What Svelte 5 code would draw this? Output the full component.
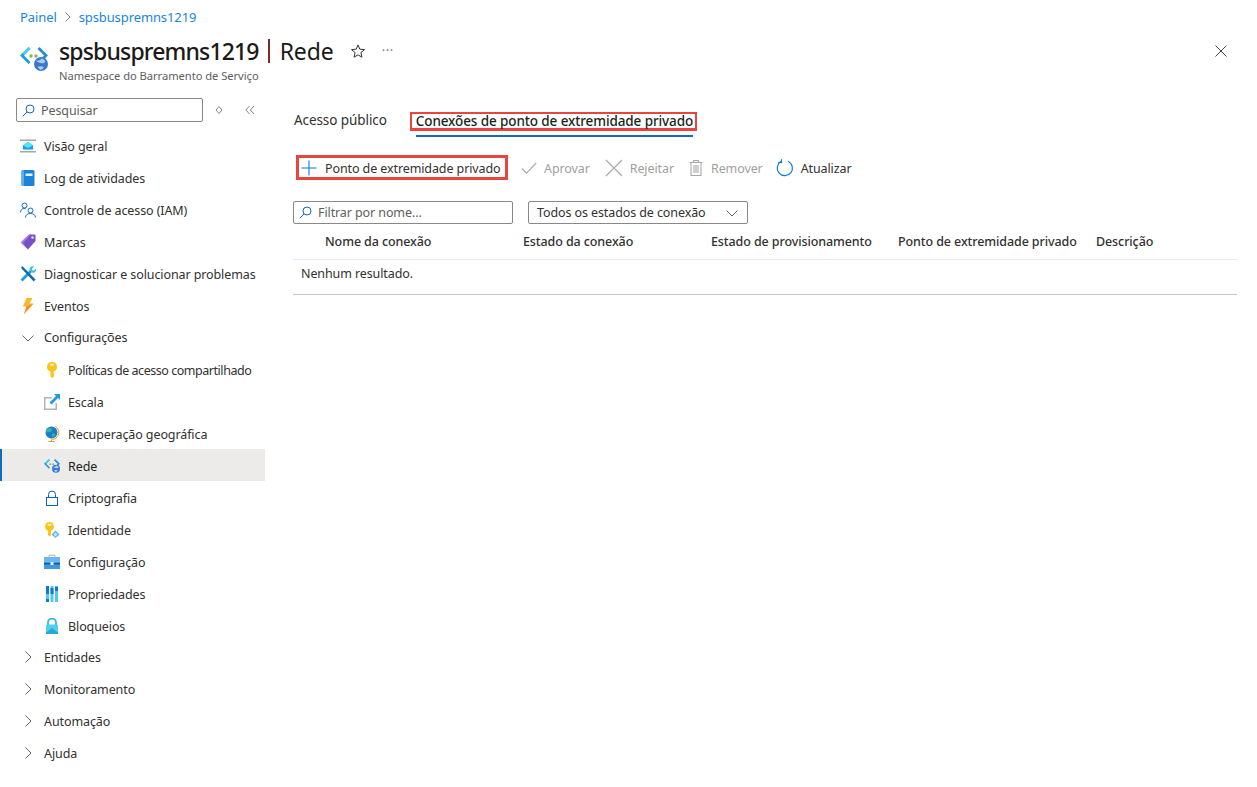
<script lang="ts">
	const topItems = [
		{ icon: 'overview', label: 'Visão geral' },
		{ icon: 'log', label: 'Log de atividades' },
		{ icon: 'iam', label: 'Controle de acesso (IAM)' },
		{ icon: 'tag', label: 'Marcas' },
		{ icon: 'tools', label: 'Diagnosticar e solucionar problemas' },
		{ icon: 'bolt', label: 'Eventos' }
	];
	const configItems = [
		{ icon: 'key', label: 'Políticas de acesso compartilhado', tight: true },
		{ icon: 'scale', label: 'Escala' },
		{ icon: 'globe', label: 'Recuperação geográfica' },
		{ icon: 'net', label: 'Rede', active: true },
		{ icon: 'lock', label: 'Criptografia' },
		{ icon: 'identity', label: 'Identidade' },
		{ icon: 'case', label: 'Configuração' },
		{ icon: 'bars', label: 'Propriedades' },
		{ icon: 'padlock', label: 'Bloqueios' }
	];
	const groups = ['Entidades', 'Monitoramento', 'Automação', 'Ajuda'];
	const columns = ['Nome da conexão', 'Estado da conexão', 'Estado de provisionamento', 'Ponto de extremidade privado', 'Descrição'];
</script>

{#snippet netIcon(size: number)}
	<svg width={size} height={(size * 24) / 28} viewBox="0 0 28 24">
		<path d="M9.500 1 2 8.500 9.500 16" fill="none" stroke="#1e9be8" stroke-width="2.800" />
		<path d="M3.500 7 9.500 1" fill="none" stroke="#50d0f5" stroke-width="2.800" />
		<path d="M18.500 1 26 8.500 23 11.500" fill="none" stroke="#1e8ce0" stroke-width="2.800" />
		<circle cx="11" cy="9" r="1.700" fill="#86b83a" />
		<circle cx="16" cy="9" r="1.700" fill="#9aa39a" />
		<circle cx="21" cy="17" r="7" fill="#3a78cc" />
		<path d="M15.500 13.500c3 1 4.500-.5 6.500-2 2 1 3 2 3.500 3-1 1.500-3 2.500-4.500 1.500-2 0-3.500-1-5.500-2.500zM17.500 20c2-1 4.500-1 6.500 0-1 1.500-2 2.500-3.500 3-1-1-2-1.800-3-3z" fill="#a9ccef" />
	</svg>
{/snippet}

{#snippet icon(name: string)}
	{#if name === 'overview'}
		<svg width="16" height="16" viewBox="0 0 16 16">
			<path d="M0 1.500h16v1.500h-16zM0 13h16v1.500h-16z" fill="#a6a6a6" />
			<path d="M2 4h12v8h-12z" fill="#e8f4fb" />
			<path d="M3 11.500v-4l5-3.500 5 3.500v4z" fill="#1e9be8" />
			<path d="M3 7.500 8 10l5-2.500-5-3.500z" fill="#50e6ff" />
		</svg>
	{:else if name === 'log'}
		<svg width="16" height="16" viewBox="0 0 16 16">
			<rect x="1.500" y="0" width="13" height="16" rx="1.500" fill="#1b84d8" />
			<rect x="1.500" y="0" width="2.500" height="16" rx="1" fill="#5aaef0" />
			<rect x="5.500" y="3.500" width="7" height="2.500" fill="#e3f1fb" />
		</svg>
	{:else if name === 'iam'}
		<svg width="16" height="16" viewBox="0 0 16 16" fill="none" stroke="#0f6cbd" stroke-width="1">
			<circle cx="4.500" cy="3.500" r="2.500" />
			<path d="M.5 10.500c0-2.500 1.500-4 3.500-4 .7 0 1.300.2 1.800.5" />
			<circle cx="10.500" cy="8.500" r="2.500" />
			<path d="M5.500 15.500c0-2.500 2-4 5-4s5 1.500 5 4" />
		</svg>
	{:else if name === 'tag'}
		<svg width="16" height="16" viewBox="0 0 16 16">
			<path d="M9 .5h5.500a1 1 0 0 1 1 1V7L8 15.500.8 8.500z" fill="#7b4fc4" />
			<path d="M.8 8.500 9 .5h2L3 9l5 6.500z" fill="#a67af4" />
			<circle cx="12.500" cy="3.500" r="1.200" fill="#e8dcfb" />
		</svg>
	{:else if name === 'tools'}
		<svg width="16" height="16" viewBox="0 0 16 16">
			<path d="M2.500 15.500.5 13.500 10 4l2 2z" fill="#1e9be8" />
			<path d="M1 1 2.500.2 15.500 13.500l-1.800 2L2.200 3.200z" fill="#0d6aa8" />
			<path d="M9.500 3.500C9.500 1.500 11.500-.3 14 .5l-2.200 2.200.6 1.500 1.500.6L16 2.600c.5 2.600-1.500 4.400-3.500 4.200z" fill="#32bedd" />
		</svg>
	{:else if name === 'bolt'}
		<svg width="16" height="16" viewBox="0 0 16 16">
			<path d="M6.500 0h6L9.500 5.500h4L4 16l2.500-7.500H2.800z" fill="#fcb72c" />
			<path d="M13.500 5.500 4 16l2.500-7.500z" fill="#f78d1e" />
		</svg>
	{:else if name === 'key'}
		<svg width="16" height="16" viewBox="0 0 16 16">
			<path d="M8 0a4.800 4.800 0 0 1 1.500 9.400V11l1 1-1 1 1 1-2.500 2-1.500-1.500V9.400A4.800 4.800 0 0 1 8 0z" fill="#fcc419" />
			<rect x="6" y="1.800" width="4" height="2" rx="1" fill="#fff3bf" />
		</svg>
	{:else if name === 'scale'}
		<svg width="16" height="16" viewBox="0 0 16 16">
			<path d="M0 3h8v1.500H1.500v10h10V9H13v7H0z" fill="#b3b3b3" />
			<path d="M10 0h6v6l-2-2-6.500 6.500-2-2L12 2z" fill="#1e9be8" />
		</svg>
	{:else if name === 'globe'}
		<svg width="16" height="16" viewBox="0 0 16 16">
			<circle cx="7.500" cy="6.500" r="6" fill="#1b7cc8" />
			<path d="M3 3c2-1.500 4-1 5 0s-1 3-3 3-3 1-3 0zM8 8c2-1 3 0 3 1s-2 2.500-3 2z" fill="#34b6a6" />
			<path d="M11.500.5a7 7 0 0 1 .5 11.500c-1.300 1-3 1.400-4.500 1.200" fill="none" stroke="#f7941d" stroke-width="1" />
			<path d="M7.500 13.500v1.500M4.500 15.500h6" stroke="#f7941d" stroke-width="1" />
		</svg>
	{:else if name === 'net'}
		{@render netIcon(16)}
	{:else if name === 'lock'}
		<svg width="16" height="16" viewBox="0 0 16 16" fill="none" stroke="#0b5cc5" stroke-width="1">
			<rect x="2.500" y="7.500" width="11" height="8" />
			<path d="M4.500 7.500V4.500a3.500 3.500 0 0 1 7 0v3" />
		</svg>
	{:else if name === 'identity'}
		<svg width="16" height="16" viewBox="0 0 16 16">
			<path d="M5.500 0a4.500 4.500 0 0 1 1.500 8.700V13l-1.500 1.500L4 13V8.700A4.500 4.500 0 0 1 5.500 0z" fill="#fcc419" />
			<rect x="3.500" y="1.800" width="4" height="2" rx="1" fill="#fff3bf" />
			<path d="M11.500 8.500 15.500 12.500l-4 3.500-4-3.500z" fill="#5cb8e6" />
			<path d="M11.500 10.500l2 2-2 1.800-2-1.800z" fill="#cde9f7" />
		</svg>
	{:else if name === 'case'}
		<svg width="16" height="16" viewBox="0 0 16 16">
			<path d="M5 3V1.200h6V3" fill="none" stroke="#b3b3b3" stroke-width="1" />
			<rect x="0" y="3" width="16" height="12" fill="#3e9be0" />
			<rect x="0" y="3" width="16" height="5" fill="#6cb8ee" />
			<rect x="0" y="9" width="16" height="1.500" fill="#0f5fa8" />
			<rect x="6.500" y="8" width="3" height="3" fill="#dff0fb" />
		</svg>
	{:else if name === 'bars'}
		<svg width="16" height="16" viewBox="0 0 16 16">
			<path d="M2 0h3v16H2z" fill="#0f78d4" />
			<path d="M2 8h3v5H2z" fill="#50c8f0" />
			<path d="M6.500 0h3v16h-3z" fill="#50c8f0" />
			<path d="M6.500 2h3v6h-3z" fill="#0f78d4" />
			<path d="M11 0h3v16h-3z" fill="#50c8f0" />
			<path d="M11 1h3v4h-3z" fill="#0f78d4" />
		</svg>
	{:else if name === 'padlock'}
		<svg width="16" height="16" viewBox="0 0 16 16">
			<path d="M4 7V4.500a4 4 0 0 1 8 0V7" fill="none" stroke="#38b6e0" stroke-width="1.800" />
			<rect x="2" y="6.500" width="12" height="9.500" rx="1" fill="#4fd0ee" />
			<path d="M2 14.500 8 10l6 4.500V16H2z" fill="#2aa9d6" />
		</svg>
	{/if}
{/snippet}

{#snippet chevronRight()}
	<svg width="12" height="12" viewBox="0 0 12 12" fill="none" stroke="#555" stroke-width="0.9"><path d="M3.500 .5 9 6l-5.500 5.500" /></svg>
{/snippet}

{#snippet chevronDown()}
	<svg width="12" height="12" viewBox="0 0 12 12" fill="none" stroke="#555" stroke-width="0.9"><path d="M.5 3.500 6 9l5.500-5.500" /></svg>
{/snippet}

{#snippet searchGlyph()}
	<svg class="glass" width="13" height="13" viewBox="0 0 13 13" fill="none" stroke="#0f6cbd" stroke-width="1">
		<circle cx="8" cy="5" r="4" />
		<path d="M5.200 7.800 .8 12.200" />
	</svg>
{/snippet}

<div class="page">
	<nav class="crumbs">
		<a href="#top">Painel</a>
		<svg width="8" height="10" viewBox="0 0 8 10" fill="none" stroke="#777" stroke-width="0.9"><path d="M1.500 .5 6 5 1.500 9.500" /></svg>
		<a href="#top">spsbuspremns1219</a>
	</nav>

	<header class="head">
		<div class="logo">{@render netIcon(28)}</div>
		<div class="titles">
			<div class="title-row">
				<h1>spsbuspremns1219<span class="sep"></span><span class="light">Rede</span></h1>
				<svg class="star" width="14" height="14" viewBox="0 0 14 14" fill="none" stroke="#333" stroke-width="1"><path d="M7 .9 8.800 5.200l4.700.4-3.600 3 1.100 4.600L7 10.800l-4 2.400 1.100-4.600-3.600-3 4.700-.4z" /></svg>
				<span class="more">···</span>
			</div>
			<div class="sub">Namespace do Barramento de Serviço</div>
		</div>
		<svg class="close" width="14" height="14" viewBox="0 0 14 14" fill="none" stroke="#444" stroke-width="1"><path d="M1.500 1.500l11 11M12.500 1.500l-11 11" /></svg>
	</header>

	<div class="body">
		<aside class="side">
			<div class="side-search">
				<div class="searchbox">{@render searchGlyph()}<span>Pesquisar</span></div>
				<svg class="updown" width="8" height="10" viewBox="0 0 8 10" fill="none" stroke="#777" stroke-width="0.9"><path d="M4 1.500 7 5 4 8.500 1 5z" /></svg>
				<svg class="collapse" width="10" height="10" viewBox="0 0 10 10" fill="none" stroke="#777" stroke-width="0.9"><path d="M4.500 1 .8 5l3.700 4M9 1 5.300 5 9 9" /></svg>
			</div>

			{#each topItems as item}
				<div class="item"><span class="ico">{@render icon(item.icon)}</span>{item.label}</div>
			{/each}

			<div class="item open"><span class="ico chev">{@render chevronDown()}</span>Configurações</div>
			{#each configItems as item}
				<div class="item sub-item" class:active={item.active} class:tight={item.tight}><span class="ico">{@render icon(item.icon)}</span>{item.label}</div>
			{/each}

			{#each groups as group}
				<div class="item"><span class="ico chev">{@render chevronRight()}</span>{group}</div>
			{/each}
		</aside>

		<main class="main">
			<div class="tabs">
				<div class="tab">Acesso público</div>
				<div class="tab current"><span class="mark">Conexões de ponto de extremidade privado</span></div>
			</div>

			<div class="toolbar">
				<button class="tool add">
					<svg width="16" height="16" viewBox="0 0 16 16" stroke="#0f7bd4" stroke-width="1.100"><path d="M8 .5v15M.5 8h15" /></svg>
					Ponto de extremidade privado
				</button>
				<button class="tool off approve">
					<svg width="16" height="16" viewBox="0 0 16 16" fill="none" stroke="#aaa" stroke-width="1.100"><path d="M.8 8.500 5.500 13.200 15.200 3" /></svg>
					Aprovar
				</button>
				<button class="tool off">
					<svg width="18" height="18" viewBox="0 0 18 18" fill="none" stroke="#aaa" stroke-width="1.100"><path d="M1 1l16 16M17 1 1 17" /></svg>
					Rejeitar
				</button>
				<button class="tool off trash">
					<svg width="14" height="16" viewBox="0 0 14 16" fill="none" stroke="#aaa" stroke-width="1.100"><path d="M.5 2.500h13M4.500 2.500V.5h5v2M2 2.500v13h10v-13M5 5v8M7 5v8M9 5v8" /></svg>
					Remover
				</button>
				<button class="tool refresh">
					<svg width="18" height="18" viewBox="0 0 18 18" fill="none" stroke="#0f7bd4" stroke-width="1.200"><path d="M5 2.500A7.600 7.600 0 1 0 12 2.200M5.500 .3V3.300H2.300" /></svg>
					Atualizar
				</button>
			</div>

			<div class="filters">
				<div class="filter">{@render searchGlyph()}<span>Filtrar por nome...</span></div>
				<div class="select"><span>Todos os estados de conexão</span>{@render chevronDown()}</div>
			</div>

			<div class="grid head-row">
				{#each columns as col}
					<div class="cell">{col}</div>
				{/each}
			</div>
			<div class="empty">Nenhum resultado.</div>
		</main>
	</div>
</div>

<style>
	:global(body) {
		margin: 0;
		background: #fff;
	}

	.page {
		width: 1257px;
		height: 787px;
		overflow: hidden;
		font-family: 'Noto Sans', 'Open Sans', sans-serif;
		font-size: 12.5px;
		letter-spacing: -0.1px;
		color: #323130;
	}

	.crumbs {
		display: flex;
		align-items: center;
		gap: 7px;
		height: 18px;
		padding: 8px 0 0 20px;
		font-size: 13px;
	}

	.crumbs a {
		color: #1a86d8;
		text-decoration: none;
	}

	.head {
		display: flex;
		align-items: flex-start;
		height: 64px;
		padding-left: 20px;
		padding-right: 29px;
	}

	.logo {
		width: 39px;
		height: 24px;
		margin-top: 21px;
	}

	.titles {
		flex: 1;
		padding-top: 9px;
	}

	.title-row {
		display: flex;
		align-items: center;
		height: 32px;
	}

	h1 {
		margin: 0;
		font-size: 23px;
		font-weight: 500;
		letter-spacing: -0.85px;
		color: #1b1a19;
		display: flex;
		align-items: center;
		white-space: nowrap;
	}

	.sep {
		display: block;
		width: 2px;
		height: 24px;
		background: #7a2b2b;
		margin: 0 10px 0 9px;
	}

	.light {
		font-weight: 400;
		letter-spacing: -0.1px;
	}

	.star {
		margin-left: 17px;
	}

	.more {
		margin-left: 17px;
		font-size: 13px;
		letter-spacing: 0.6px;
		color: #777;
		position: relative;
		top: -1px;
	}

	.sub {
		font-size: 11.2px;
		letter-spacing: -0.05px;
		color: #605e5c;
		margin-top: 1px;
	}

	.close {
		margin-top: 18px;
	}

	.body {
		display: flex;
	}

	.side {
		width: 265px;
		flex: none;
	}

	.side-search {
		display: flex;
		align-items: center;
		height: 24px;
		padding: 8px 0 8px 16px;
	}

	.searchbox {
		box-sizing: border-box;
		width: 187px;
		height: 24px;
		border: 1px solid #8a8886;
		border-radius: 2px;
		display: flex;
		align-items: center;
		gap: 6px;
		padding-left: 5px;
		color: #605e5c;
	}

	.updown {
		margin-left: 12px;
	}

	.collapse {
		margin-left: 22px;
	}

	.item {
		box-sizing: border-box;
		display: flex;
		align-items: center;
		height: 32px;
		padding-left: 20px;
		white-space: nowrap;
	}

	.open {
		height: 31px;
	}

	.sub-item {
		padding-left: 44px;
		padding-top: 2px;
	}

	.tight {
		letter-spacing: -0.46px;
	}

	.ico {
		width: 16px;
		height: 16px;
		margin-right: 8px;
		display: flex;
		align-items: center;
		justify-content: center;
		flex: none;
	}

	.chev {
		justify-content: flex-start;
		padding-left: 2px;
		box-sizing: border-box;
	}

	.active {
		background: #edebe9;
		box-shadow: inset 2px 0 0 #0f6cbd;
		color: #201f1e;
	}

	.main {
		flex: 1;
		padding-left: 28px;
		padding-right: 20px;
	}

	.tabs {
		display: flex;
		align-items: flex-start;
		height: 43px;
		padding-top: 22px;
		font-size: 13.5px;
	}

	.tab {
		box-sizing: border-box;
		height: 18px;
		line-height: 16px;
		white-space: nowrap;
		letter-spacing: -0.08px;
	}

	.tab:first-child {
		padding-left: 1px;
	}

	.current {
		height: 25px;
		margin-left: 29px;
		font-weight: 500;
		letter-spacing: -0.11px;
		color: #201f1e;
		box-shadow: inset 0 -2px 0 #0f6cbd;
	}

	.mark {
		box-sizing: border-box;
		display: block;
		height: 19px;
		line-height: 14px;
		border: 2px solid #e8453f;
		border-bottom-width: 3px;
		padding: 0 2px 0 4px;
		margin: 0 -4px 0 -6px;
	}

	.toolbar {
		display: flex;
		align-items: center;
		height: 25px;
	}

	.tool {
		display: flex;
		align-items: center;
		gap: 7px;
		border: 0;
		background: none;
		padding: 1px 0 0;
		margin-left: 15px;
		font: inherit;
		letter-spacing: inherit;
		color: inherit;
		white-space: nowrap;
	}

	.add {
		box-sizing: border-box;
		height: 25px;
		width: 212px;
		margin-left: 3px;
		padding-left: 5px;
		gap: 8px;
		outline: 3px solid #e8453f;
		outline-offset: -3px;
	}

	.approve {
		margin-left: 13px;
	}

	.off {
		color: #a19f9d;
	}

	.trash {
		gap: 8px;
	}

	.refresh {
		margin-left: 13px;
	}

	.filters {
		display: flex;
		gap: 15px;
		margin-top: 21px;
	}

	.filter,
	.select {
		box-sizing: border-box;
		width: 220px;
		height: 23px;
		border: 1px solid #8a8886;
		border-radius: 2px;
		display: flex;
		align-items: center;
	}

	.filter {
		gap: 6px;
		padding-left: 5px;
		color: #605e5c;
	}

	.select {
		justify-content: space-between;
		padding: 0 9px 0 8px;
	}

	.grid {
		display: grid;
		grid-template-columns: 230px 188px 187px 198px 1fr;
	}

	.head-row {
		height: 35px;
		align-items: center;
		font-weight: 500;
		border-bottom: 1px solid #edebe9;
	}

	.cell:first-child {
		padding-left: 32px;
	}

	.empty {
		display: flex;
		align-items: center;
		height: 27px;
		padding: 0 0 7px 8px;
		border-bottom: 1px solid #c8c6c4;
	}
</style>
